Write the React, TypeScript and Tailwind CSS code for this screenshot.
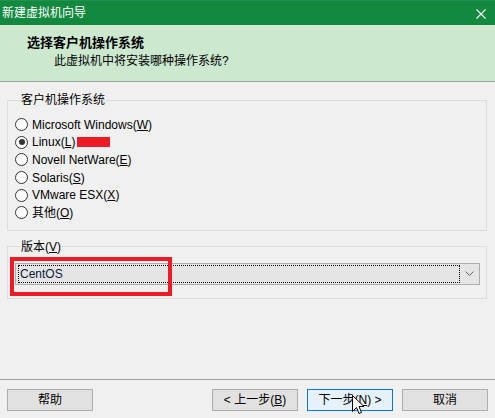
import React from 'react';

const font = { fontFamily: '"Liberation Sans", "Noto Sans CJK SC", sans-serif' };

type OsOption = { label: string; key: string; after?: string; checked?: boolean };

const osList: OsOption[] = [
  { label: 'Microsoft Windows(', key: 'W', after: ')' },
  { label: 'Linux(', key: 'L', after: ')', checked: true },
  { label: 'Novell NetWare(', key: 'E', after: ')' },
  { label: 'Solaris(', key: 'S', after: ')' },
  { label: 'VMware ESX(', key: 'X', after: ')' },
  { label: '其他(', key: 'O', after: ')' },
];

function Radio({ checked }: { checked?: boolean }) {
  return (
    <span className="flex h-[13px] w-[13px] shrink-0 items-center justify-center rounded-full border border-[#333333] bg-white">
      {checked && <span className="h-[6px] w-[6px] rounded-full bg-[#333333]" />}
    </span>
  );
}

function Button({ children, primary }: { children: React.ReactNode; primary?: boolean }) {
  return (
    <button
      className={
        primary
          ? 'flex h-[22px] w-[86px] items-center justify-center border border-[#0078d7] bg-[#e5f1fb] text-[12px] text-black'
          : 'flex h-[22px] w-[86px] items-center justify-center border border-[#adadad] bg-[#e1e1e1] text-[12px] text-black'
      }
    >
      {children}
    </button>
  );
}

export default function App() {
  return (
    <div className="relative flex h-[418px] w-[495px] flex-col overflow-hidden bg-[#f0f0f0] text-black" style={font}>
      {/* title bar */}
      <div className="flex h-[25px] items-center justify-between border-t border-[#1f9150] bg-[#12893f] pl-[2px] pr-[9px]">
        <span className="text-[12px] leading-none text-white">新建虚拟机向导</span>
        <svg width="10" height="10" viewBox="0 0 10 10" className="mt-[1px]">
          <path d="M0.5 0.5 L9.5 9.5 M9.5 0.5 L0.5 9.5" stroke="white" strokeWidth="1.1" />
        </svg>
      </div>

      {/* header */}
      <div className="flex h-[57px] flex-col border-b border-[#a0a0a0] bg-[#cce8cf]">
        <div className="ml-[27px] mt-[10px] text-[13px] font-bold leading-[16px]">选择客户机操作系统</div>
        <div className="ml-[54px] mt-[3px] text-[12px] leading-[14px]">此虚拟机中将安装哪种操作系统?</div>
      </div>

      {/* guest os group */}
      <fieldset className="ml-[7px] mt-[10px] w-[480px] border border-[#dcdcdc] pb-[8px] pl-[7px]">
        <legend className="ml-[5px] px-[1px] text-[12px] leading-[16px]">客户机操作系统</legend>
        <div className="mt-[8px] flex flex-col">
          {osList.map((os) => (
            <div key={os.key} className="flex h-[17.6px] items-center gap-[4px] text-[12px]">
              <Radio checked={os.checked} />
              <span className="leading-none">
                {os.label}
                <span className="underline">{os.key}</span>
                {os.after}
              </span>
            </div>
          ))}
        </div>
      </fieldset>

      {/* version group */}
      <fieldset className="ml-[7px] mt-[8px] w-[480px] border border-[#dcdcdc] pb-[13px] pl-[7px]">
        <legend className="ml-[5px] px-[1px] text-[12px] leading-[16px]">
          版本(<span className="underline">V</span>)
        </legend>
        <div className="mt-[8px] flex h-[22px] w-[465px] items-center border border-[#adadad] bg-[#e5e5e5] pl-[2px]">
          <div className="flex h-[18px] flex-1 items-center border border-dotted border-black pl-[1px] text-[12px] text-[#0a1a40]">
            CentOS
          </div>
          <div className="flex w-[19px] items-center justify-center">
            <svg width="9" height="5" viewBox="0 0 9 5">
              <path d="M0.5 0.5 L4.5 4.5 L8.5 0.5" stroke="#606060" strokeWidth="1" fill="none" />
            </svg>
          </div>
        </div>
      </fieldset>

      <div className="flex-1" />

      {/* footer */}
      <div className="flex h-[39px] items-start border-t border-[#a0a0a0] pl-[7px] pt-[9px]">
        <Button>帮助</Button>
        <div className="ml-[119px] flex gap-[9px]">
          <Button>&lt; 上一步(<span className="underline">B</span>)</Button>
          <Button primary>
            下一步(<span className="underline">N</span>) &gt;
          </Button>
          <Button>取消</Button>
        </div>
      </div>

      {/* red redaction mark next to Linux */}
      <div className="pointer-events-none absolute left-[77px] top-[137px] h-[10px] w-[33px] bg-[#ed1c24]" />

      {/* red highlight around version selection */}
      <div className="pointer-events-none absolute left-[10px] top-[257px] h-[39px] w-[162px] border-[4px] border-[#ed1c24]" />

      {/* mouse cursor */}
      <svg className="pointer-events-none absolute left-[352px] top-[395px]" width="13" height="21" viewBox="0 0 13 21">
        <path
          d="M0.5 0.5 L0.5 16.5 L4.5 12.5 L7 18.5 L9.5 17.5 L7 11.5 L12 11.5 Z"
          fill="white"
          stroke="black"
          strokeWidth="1"
          strokeLinejoin="miter"
        />
      </svg>
    </div>
  );
}
